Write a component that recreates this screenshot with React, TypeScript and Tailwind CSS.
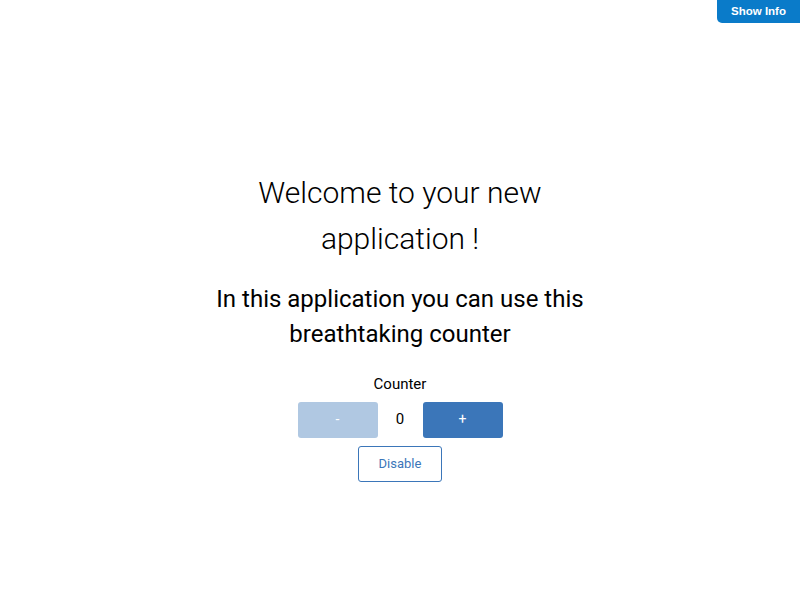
import React, { useState } from "react";

export default function App() {
  const [count, setCount] = useState(0);
  const [disabled, setDisabled] = useState(false);

  return (
    <div className="relative h-[616px] w-full bg-white font-['Roboto',sans-serif] text-black">
      <button
        type="button"
        className="absolute right-0 top-0 h-[23px] w-[83px] rounded-bl-[5px] bg-[#0a7bc9] font-['Liberation_Sans',Arial,sans-serif] text-[11.5px] font-bold text-white"
      >
        Show Info
      </button>

      <div className="flex h-full flex-col items-center justify-center pt-[35px]">
        <div className="flex w-[400px] flex-col items-center text-center">
          <h1 className="text-[30px] font-light leading-[46px]">
            Welcome to your new application !
          </h1>
          <h2 className="mt-[20px] text-[24px] font-normal leading-[35px]">
            In this application you can use this breathtaking counter
          </h2>
          <div className="mt-[22px] text-[15px] leading-[20px]">Counter</div>
          <div className="mt-[8px] flex items-center">
            <button
              type="button"
              disabled={disabled || count <= 0}
              onClick={() => setCount((c) => c - 1)}
              className={`h-[36px] w-[80px] rounded-[3px] text-[14px] text-white ${
                disabled || count <= 0 ? "bg-[#b0c8e2]" : "bg-[#3b76b9]"
              }`}
            >
              -
            </button>
            <span className="w-[45px] text-center text-[15px]">{count}</span>
            <button
              type="button"
              disabled={disabled}
              onClick={() => setCount((c) => c + 1)}
              className={`h-[36px] w-[80px] rounded-[3px] text-[14px] text-white ${
                disabled ? "bg-[#b0c8e2]" : "bg-[#3b76b9]"
              }`}
            >
              +
            </button>
          </div>
          <button
            type="button"
            onClick={() => setDisabled((d) => !d)}
            className="mt-[8px] h-[36px] w-[84px] rounded-[3px] border border-[#3b76b9] bg-white text-[13px] text-[#3b76b9]"
          >
            {disabled ? "Enable" : "Disable"}
          </button>
        </div>
      </div>
    </div>
  );
}
